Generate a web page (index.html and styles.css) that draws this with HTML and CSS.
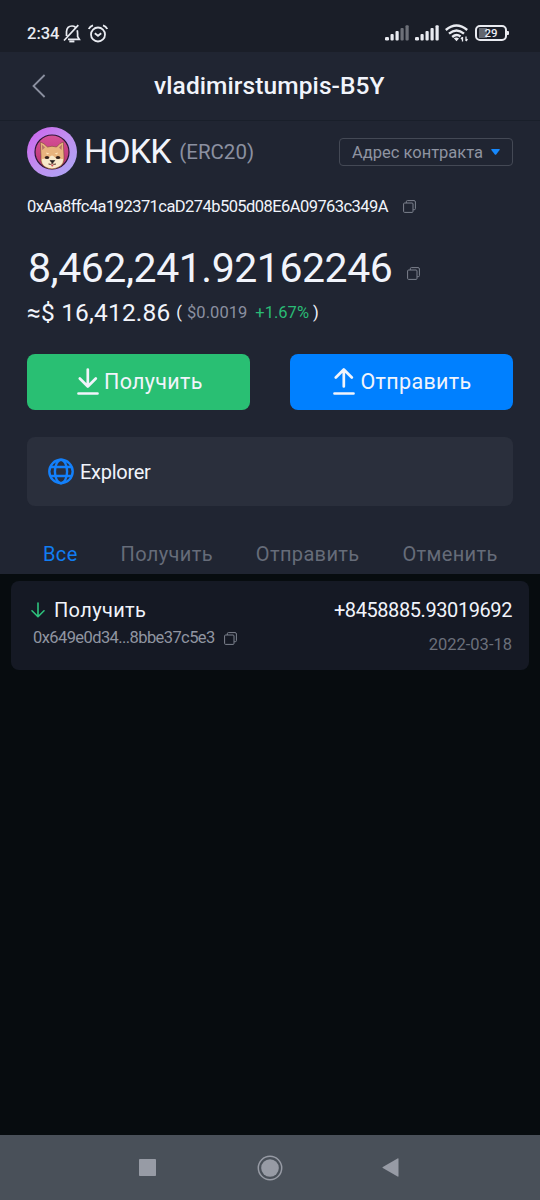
FILE: index.html
```html
<!DOCTYPE html>
<html lang="ru">
<head>
<meta charset="utf-8">
<title>HOKK</title>
<link rel="stylesheet" href="styles.css">
</head>
<body>
<svg class="defs" width="0" height="0">
  <symbol id="copy" viewBox="0 0 13 13"><path d="M3.3 3V1.7Q3.3.6 4.4.6H11Q12.4.6 12.4 2V8.6Q12.4 9.7 11.3 9.7H10.2M1.6 3H9Q10 3 10 4V11.4Q10 12.4 9 12.4H1.6Q.6 12.4.6 11.4V4Q.6 3 1.6 3Z" fill="none" stroke="currentColor" stroke-width="1"/></symbol>
</svg>
<header class="status">
  <span class="time">2:34</span>
  <svg class="bell" width="18" height="19" viewBox="0 0 18 19" fill="none" stroke="currentColor" stroke-width="1.7"><path d="M3.5 12V7.5Q4 2 9 2Q11 2 12.3 3.2M14.2 6.3Q14.6 8 14.6 10V12.5L16.3 15.3H5M1 16.5L15.3 1.2"/><path d="M6.3 17.4H11.4" stroke-width="2"/></svg>
  <svg class="alarm" width="20" height="19" viewBox="0 0 20 19" fill="none" stroke="currentColor" stroke-width="1.8"><circle cx="10" cy="10.5" r="7"/><path d="M.8 5Q2 2.300 5 1.300M19.200 5Q18 2.300 15 1.300M6.800 9.300L10 11.800L13.200 9.300"/></svg>
  <span class="grow"></span>
  <svg class="signal" width="25" height="16" viewBox="0 0 25 16" fill="currentColor"><rect y="12" width="4" height="3.500" rx="1.300"/><rect x="5.500" y="9" width="3.200" height="6.500" rx="1"/><rect x="10.500" y="6" width="3.200" height="9.500" rx="1"/><g opacity=".4"><rect x="15.500" y="3" width="3.200" height="12.500" rx="1"/><rect x="20.500" y=".3" width="3.200" height="15.200" rx="1"/></g></svg>
  <svg class="signal second" width="25" height="16" viewBox="0 0 25 16" fill="currentColor"><rect y="12" width="4" height="3.500" rx="1.300"/><rect x="5.500" y="9" width="3.200" height="6.500" rx="1"/><rect x="10.500" y="6" width="3.200" height="9.500" rx="1"/><rect x="15.500" y="3" width="3.200" height="12.500" rx="1"/><rect x="20.500" y=".3" width="3.200" height="15.200" rx="1"/></svg>
  <svg class="wifi" width="24" height="18" viewBox="0 0 24 18" fill="none" stroke="currentColor" stroke-width="2.400"><path d="M.8 6Q11.500-3 22.200 6M4 9.700Q11.500 3.300 19 9.700M7.200 13Q11.500 9.300 15.500 12.500"/><path d="M8.800 14.300L11.500 17.300L14 14.600Q11.500 12.700 8.800 14.300Z" fill="currentColor" stroke="none"/><path d="M17.500 13V17.500M16 15L17.500 13.200M21 12.500V17M21 17L22.500 15.200" stroke-width="1.300"/></svg>
  <span class="battery"><span class="level">29</span></span>
</header>
<main class="panel">
  <nav class="titlebar">
    <svg class="back" width="14" height="24" viewBox="0 0 14 24" fill="none" stroke="currentColor" stroke-width="1.800"><path d="M12.600 1L1.500 12L12.600 23"/></svg>
    <h1 class="title">vladimirstumpis-B5Y</h1>
  </nav>
  <section class="token">
    <svg class="logo" width="50" height="50" viewBox="0 0 50 50">
      <defs><linearGradient id="ring" x1="0" y1="0" x2="1" y2="1"><stop offset=".1" stop-color="#ca69ee"/><stop offset=".5" stop-color="#c190f0"/><stop offset="1" stop-color="#aaa9f5"/></linearGradient>
      <linearGradient id="disc" x1="0" y1="0" x2="0" y2="1"><stop stop-color="#d65197"/><stop offset="1" stop-color="#b9306f"/></linearGradient></defs>
      <circle cx="25" cy="25" r="25" fill="url(#ring)"/>
      <circle cx="25" cy="25" r="17" fill="url(#disc)" stroke="#2c1736" stroke-width="1.200"/>
      <path d="M14 30L13.300 15Q17 16 20.500 20Q25 18.500 29.500 20Q32.500 16 36.300 15L37 29Q38 38 31 40.500Q25 43.500 19 40.500Q12.500 37 14 30Z" fill="#e8b47e" stroke="#784438" stroke-width=".6"/>
      <path d="M14.800 17.500L15.300 23L18 20.500ZM35 17.500L34.500 23L32 20.500Z" fill="#b8756a"/>
      <path d="M15 32Q20 32 22.500 30Q25 27 27.500 30Q30 32 36 32Q36 38 30.500 40Q25 42.500 19.500 40Q14.500 38 15 32Z" fill="#f8e8ca"/>
      <path d="M19 25.500L22.500 26.500L20 27.500ZM31 25.500L27.500 26.500L30 27.500Z" fill="#ffe5ba"/>
      <ellipse cx="20" cy="30.500" rx="2.200" ry="1.600" fill="#33221e"/><ellipse cx="31" cy="30.500" rx="2.200" ry="1.600" fill="#33221e"/>
      <path d="M23 33.500H27.800L25.400 36.300Z" fill="#20191b" stroke="#20191b" stroke-width=".6"/><path d="M21.500 37Q24 38 25.300 36.500Q26.500 38 29 37" fill="none" stroke="#5b302b"/><circle cx="25.300" cy="38.500" r="1.100" fill="#cd4f56"/>
    </svg>
    <span class="symbol">HOKK</span>
    <span class="standard">(ERC20)</span>
    <span class="grow"></span>
    <button class="contract"><span class="contract-label">Адрес контракта</span><svg width="9" height="6" viewBox="0 0 9 6"><path d="M.8 0H8.200Q9.200.2 8.600 1L5.200 5.500Q4.500 6 3.800 5.500L.4 1Q-.2.2.8 0Z" fill="#1688fc"/></svg></button>
  </section>
  <div class="address"><span class="address-text">0xAa8ffc4a192371caD274b505d08E6A09763c349A</span><svg class="copy" width="13" height="13"><use href="#copy"/></svg></div>
  <div class="balance"><span class="balance-text">8,462,241.92162246</span><svg class="copy" width="13" height="13"><use href="#copy"/></svg></div>
  <div class="fiat"><span class="total">≈$ 16,412.86</span><span class="paren">(</span><span class="price">$0.0019</span><span class="change">+1.67%</span><span class="paren close">)</span></div>
  <div class="actions">
    <button class="action receive"><svg width="22" height="27" viewBox="0 0 22 27" fill="none" stroke="currentColor" stroke-width="2.700" stroke-linecap="round" stroke-linejoin="round"><path d="M10.800 1.500V18M2.800 10.500L10.800 18.500L18.800 10.500M1.500 25.500H20.500"/></svg><span class="receive-label">Получить</span></button>
    <button class="action send"><svg width="22" height="27" viewBox="0 0 22 27" fill="none" stroke="currentColor" stroke-width="2.700" stroke-linecap="round" stroke-linejoin="round"><path d="M10.800 18.500V1.500M2.800 9.500L10.800 1.500L18.800 9.500M1.500 25.500H20.500"/></svg><span class="send-label">Отправить</span></button>
  </div>
  <div class="explorer"><svg width="26" height="27" viewBox="0 0 26 27" fill="none" stroke="#1380fb" stroke-width="2.400"><circle cx="13" cy="13.500" r="11.700"/><ellipse cx="13" cy="13.500" rx="6.100" ry="11.700"/><path d="M2 9H24M2 18H24"/></svg><span class="explorer-label">Explorer</span></div>
  <div class="tabs"><span class="tab active">Все</span><span class="tab">Получить</span><span class="tab">Отправить</span><span class="tab">Отменить</span></div>
</main>
<section class="list">
  <article class="tx">
    <div class="tx-left">
      <div class="tx-type"><svg width="14" height="16" viewBox="0 0 14 16" fill="none" stroke="#2ec37d" stroke-width="1.600" stroke-linecap="round" stroke-linejoin="round"><path d="M7 1V14.500M1 8.800L7 14.700L13 8.800"/></svg><span class="tx-name">Получить</span></div>
      <div class="tx-hash"><span class="hash-text">0x649e0d34...8bbe37c5e3</span><svg class="copy" width="13" height="13"><use href="#copy"/></svg></div>
    </div>
    <div class="tx-right"><span class="amount">+8458885.93019692</span><span class="date">2022-03-18</span></div>
  </article>
</section>
<footer class="navbar">
  <svg width="17" height="17"><rect width="17" height="17" rx=".8" fill="#979ba5"/></svg>
  <svg width="26" height="26" viewBox="0 0 26 26"><circle cx="13" cy="13" r="11.700" fill="none" stroke="#979ba5" stroke-width="1.500"/><circle cx="13" cy="13" r="8.800" fill="#979ba5"/></svg>
  <svg width="17" height="19" viewBox="0 0 17 19"><path d="M.8 9L16 .3Q16.500.2 16.500 1V18Q16.500 18.800 16 18.700L.8 10Q0 9.500.8 9Z" fill="#979ba5"/></svg>
</footer>
</body>
</html>
```
FILE: styles.css
```css
* { box-sizing: border-box; }
body { margin: 0; width: 540px; height: 1200px; display: flex; flex-direction: column; background: #070c0f; color: #f1f4fb; font-family: Roboto, sans-serif; overflow: hidden; }
svg { display: block; flex: none; }
span, h1 { white-space: nowrap; }
button { font: inherit; color: inherit; border: 0; padding: 0; }
.defs { position: absolute; }
.grow { flex: 1; }
.status { height: 52px; flex: none; background: #1a1e28; display: flex; align-items: center; padding: 14px 33px 0 27px; color: #e9ebf1; }
.time { font-size: 16.500px; font-weight: 500; line-height: 20px; width: 36px; padding-top: 2px; }
.bell { margin-right: 7px; }
.signal { margin-right: 5px; }
.wifi { margin-right: 6px; }
.battery { width: 32px; height: 16px; border: 2px solid currentColor; border-radius: 5px; position: relative; font-size: 11.500px; line-height: 12.500px; font-weight: 500; text-align: center; background: linear-gradient(90deg, #62666f 8px, transparent 8px) 2px 1px / 24px 10px no-repeat; }
.battery::after { content: ""; position: absolute; right: -4px; top: 4px; width: 2px; height: 4px; background: currentColor; border-radius: 0 1px 1px 0; }
.panel { height: 522px; flex: none; background: #202532; display: flex; flex-direction: column; }
.titlebar { height: 69px; border-bottom: 1px solid #191f2a; display: flex; align-items: center; padding-left: 32px; color: #8b90a0; }
.title { margin: 0 0 0 108px; color: #f1f4fb; font-size: 24.500px; letter-spacing: .09px; font-weight: 500; line-height: 30px; }
.token { height: 62px; display: flex; align-items: center; padding: 0 27px; }
.symbol { font-size: 34px; line-height: 40px; margin: -2px 0 0 7px; letter-spacing: -.9px; }
.standard { font-size: 20.500px; color: #8b90a0; margin-left: 8.500px; }
.contract { width: 174px; height: 28px; border: 1px solid #444955; border-radius: 4px; background: none; display: flex; align-items: center; padding-left: 12px; gap: 8px; color: #8f94a1; }
.contract-label { font-size: 16.500px; }
.address { height: 46px; padding-left: 27px; display: flex; align-items: center; gap: 15px; }
.address-text { font-size: 16.500px; letter-spacing: -.56px; }
.copy { color: #7d828e; }
.balance { height: 68px; padding: 10px 0 0 28px; display: flex; align-items: center; gap: 15px; }
.balance-text { font-size: 41px; line-height: 48px; letter-spacing: -.46px; }
.balance .copy { margin-top: 10px; }
.fiat { height: 30px; padding-left: 27px; display: flex; align-items: center; font-size: 16.500px; }
.total { font-size: 24.500px; letter-spacing: .17px; }
.paren { margin-left: 6px; }
.price { margin-left: 5px; color: #8b90a0; letter-spacing: .05px; }
.change { margin-left: 8px; color: #2abb75; }
.close { margin-left: 4px; }
.actions { display: flex; justify-content: space-between; padding: 0 27px; margin-top: 27px; }
.action { width: 223px; height: 56px; border-radius: 8px; display: flex; align-items: center; padding-bottom: 1px; font-size: 21.500px; letter-spacing: .32px; }
.action svg { margin-right: 5.500px; }
.receive { background: #29bf73; padding-left: 49.500px; }
.send { background: #0080ff; padding-left: 43px; }
.explorer { height: 69px; margin: 27px 27px 0; border-radius: 8px; background: #2a2f3c; display: flex; align-items: center; padding-left: 21px; gap: 6px; font-size: 20px; letter-spacing: -.28px; }
.explorer-label { padding-top: 1px; }
.tabs { flex: 1; padding: 27px 0 0 43px; display: flex; align-items: center; font-size: 20px; letter-spacing: .35px; color: #666c79; }
.active { color: #117df3; }
.tab + .tab { margin-left: 43px; }
.list { flex: 1; padding: 7px 11px; }
.tx { height: 89px; border-radius: 8px; background: #151924; display: flex; justify-content: space-between; padding: 16px 17px 0 20px; }
.tx-type { display: flex; align-items: center; gap: 9px; font-size: 20px; letter-spacing: .35px; line-height: 26px; }
.tx-hash { display: flex; align-items: center; gap: 9px; padding-left: 2px; font-size: 16.500px; line-height: 24px; margin-top: 3px; color: #9095a1; }
.hash-text { letter-spacing: -.59px; }
.tx-right { display: flex; flex-direction: column; align-items: flex-end; }
.amount { font-size: 20px; line-height: 26px; letter-spacing: -.42px; }
.date { font-size: 16.500px; line-height: 24px; color: #6b707b; margin-top: 10px; }
.navbar { height: 65px; flex: none; background: #495059; display: flex; align-items: center; justify-content: space-between; padding: 0 141px 0 139px; }
.navbar svg:nth-child(2) { margin-left: 1px; }
```
